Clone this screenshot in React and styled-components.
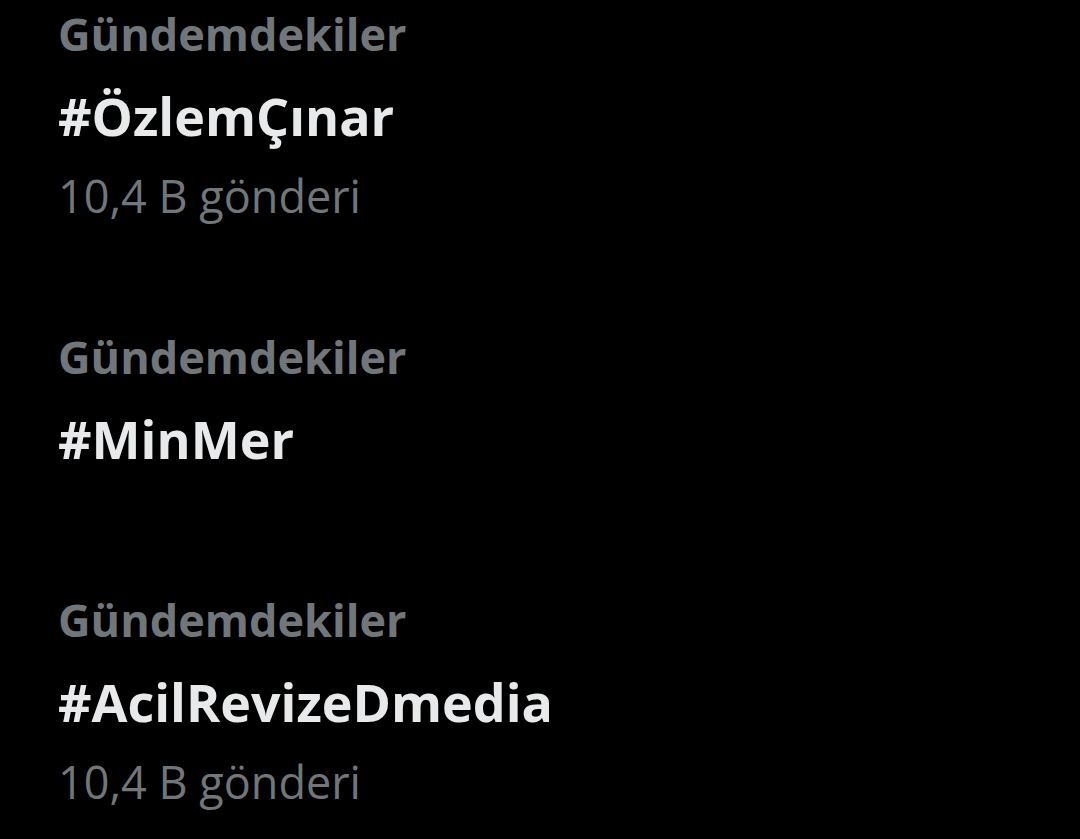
import React from 'react';
import styled, { createGlobalStyle } from 'styled-components';

const Global = createGlobalStyle`
  html, body {
    margin: 0;
    padding: 0;
    background: #000;
  }
  body {
    font-family: "Open Sans", "Noto Sans", "Liberation Sans", sans-serif;
    -webkit-font-smoothing: antialiased;
  }
`;

const Page = styled.div`
  width: 1080px;
  height: 839px;
  background: #000;
  overflow: hidden;
  padding: 2px 0 0 58px;
  box-sizing: border-box;
  display: flex;
  flex-direction: column;
`;

const Trend = styled.div`
  display: flex;
  flex-direction: column;
  margin-bottom: ${p => p.gap}px;
`;

const Label = styled.div`
  color: #71767b;
  font-size: 45px;
  font-weight: 700;
  line-height: 64px;
`;

const Tag = styled.div`
  color: #e7e9ea;
  font-size: 52px;
  font-weight: 700;
  line-height: 100px;
`;

const Count = styled.div`
  color: #71767b;
  font-size: 45px;
  font-weight: 400;
  line-height: 60px;
`;

const trends = [
  { tag: '#ÖzlemÇınar', count: '10,4 B gönderi', gap: 99 },
  { tag: '#MinMer', gap: 99 },
  { tag: '#AcilRevizeDmedia', count: '10,4 B gönderi', gap: 0 },
];

const App = () => {
  return (
    <>
      <Global />
      <Page>
        {trends.map(t => (
          <Trend key={t.tag} gap={t.gap}>
            <Label>Gündemdekiler</Label>
            <Tag>{t.tag}</Tag>
            {t.count && <Count>{t.count}</Count>}
          </Trend>
        ))}
      </Page>
    </>
  );
};

export default App;
